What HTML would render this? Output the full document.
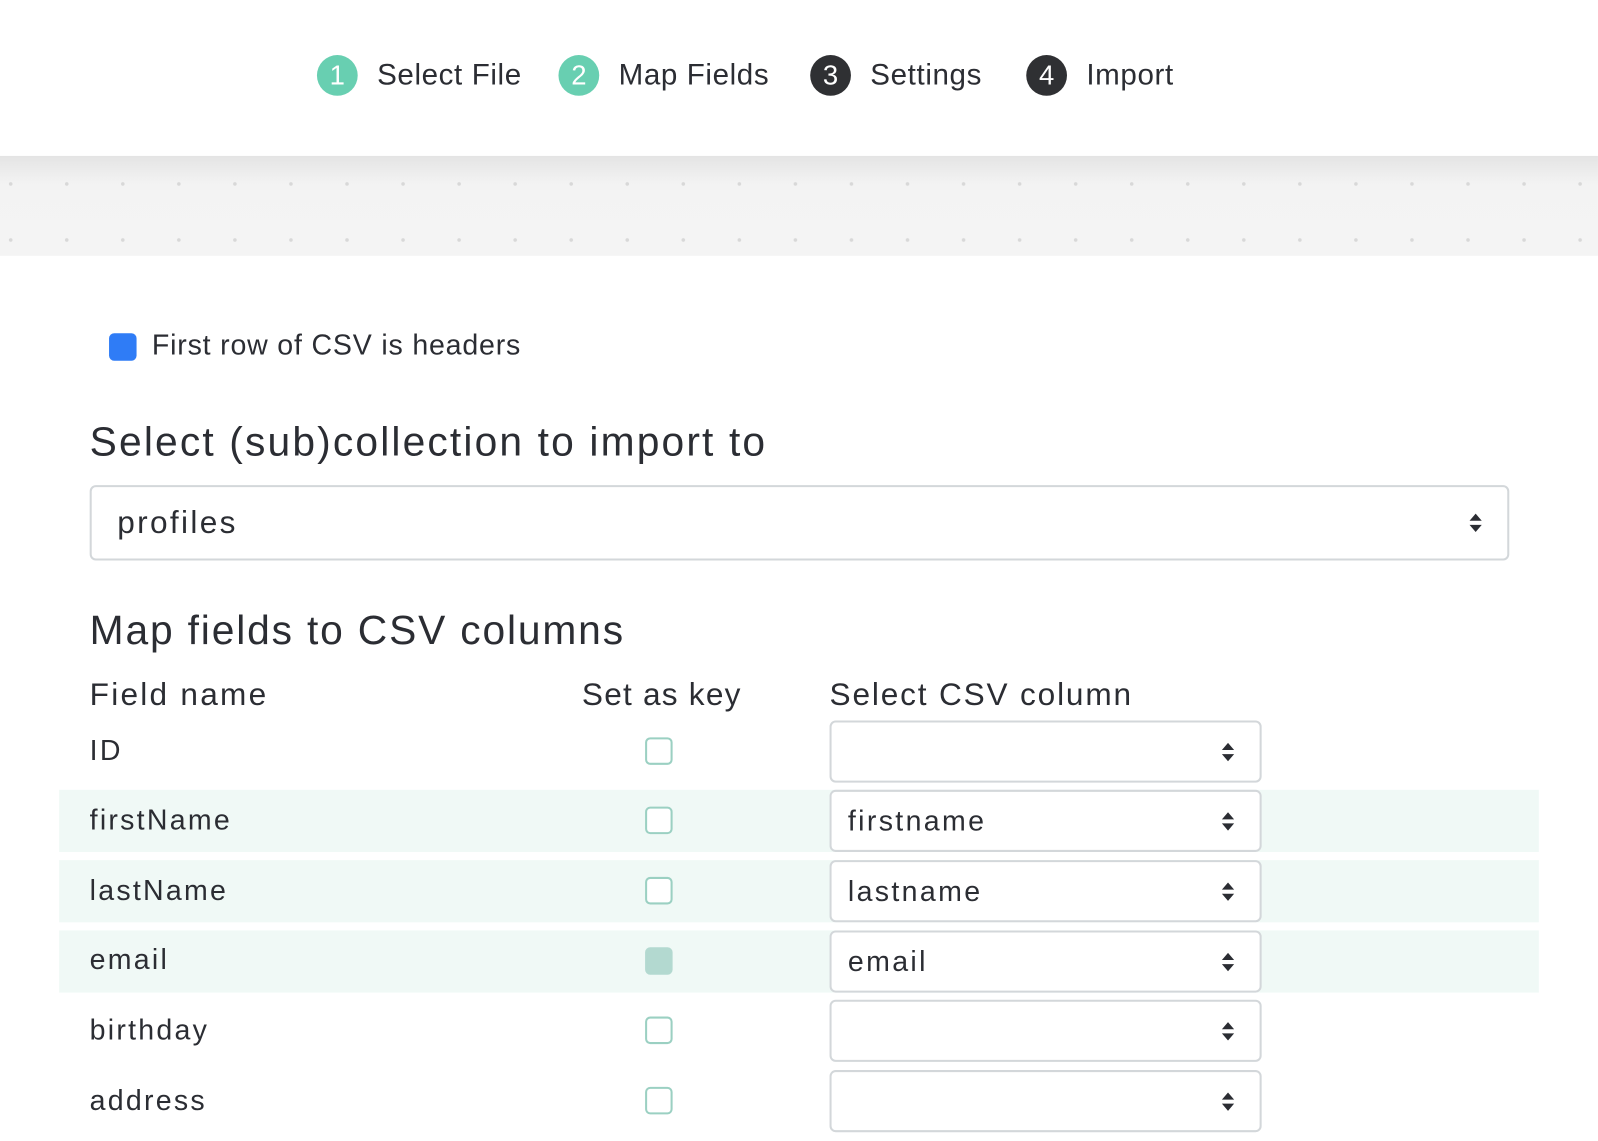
<!DOCTYPE html>
<html><head><style>
body{margin:0;width:1598px;height:1140px;overflow:hidden;background:#fff;font-family:"Liberation Sans",sans-serif;color:#2b2d33;position:relative}
#w{position:absolute;left:0;top:0;width:1568px;height:1120px;transform:scale(1.0191);transform-origin:0 0}
.a{position:absolute}
.step{position:absolute;top:54px;height:40px;display:flex;align-items:center;font-size:29px;color:#2b2d33;letter-spacing:0.6px}
.c{width:40px;height:40px;border-radius:50%;color:#fff;font-size:27px;display:flex;align-items:center;justify-content:center;margin-right:19px;letter-spacing:0}
.band{position:absolute;left:0;top:153px;width:1568px;height:98px;
background-image:radial-gradient(circle,#d8d8d8 1.6px,transparent 2px),linear-gradient(#e4e4e4,#f3f3f3 28px,#f4f4f4);
background-size:55px 55px,100% 100%;background-position:-17px 0px,0 0;background-repeat:repeat,no-repeat}
.sel{position:absolute;border:2px solid #d3d7da;border-radius:6px;box-sizing:border-box;background:#fff;font-size:28px;display:flex;align-items:center;letter-spacing:2.3px}
.arr{position:absolute;right:24px;top:50%;transform:translateY(-50%);width:14px;height:20px}
.row{position:absolute;left:58px;width:1452px;height:61px;background:#f0f9f6}
.lbl{position:absolute;left:88px;font-size:28px;transform:translateY(-50%);letter-spacing:2.2px}
.cb{position:absolute;left:633px;width:27px;height:27px;border:2px solid #9bd0c2;border-radius:5px;box-sizing:border-box;background:#fff;transform:translateY(-50%)}
.h{font-size:40px;letter-spacing:2.1px}
.th{font-size:31px;letter-spacing:2.2px}
</style></head><body><div id="w">
<div class="step" style="left:311px"><div class="c" style="background:#68cfb1">1</div>Select File</div>
<div class="step" style="left:548px"><div class="c" style="background:#68cfb1">2</div>Map Fields</div>
<div class="step" style="left:795px"><div class="c" style="background:#2f3033">3</div>Settings</div>
<div class="step" style="left:1007px"><div class="c" style="background:#2f3033">4</div>Import</div>
<div class="band"></div>

<div class="a" style="left:107px;top:327px;width:27px;height:27px;background:#2f7cf6;border-radius:5px"></div>
<div class="a" style="left:149px;top:323px;font-size:28px;letter-spacing:0.8px">First row of CSV is headers</div>
<div class="a h" style="left:88px;top:412px">Select (sub)collection to import to</div>
<div class="sel" style="left:88px;top:476px;width:1393px;height:74px;padding-left:25px;font-size:31px">profiles<svg class="arr" viewBox="0 0 14 20"><path d="M7 1L13 8H1z M7 19L13 12H1z" fill="#2b2d33"/></svg></div>
<div class="a h" style="left:88px;top:597px;letter-spacing:1.8px">Map fields to CSV columns</div>
<div class="a th" style="left:88px;top:664px">Field name</div>
<div class="a th" style="left:571px;top:664px;letter-spacing:1.2px">Set as key</div>
<div class="a th" style="left:814px;top:664px;letter-spacing:1.8px">Select CSV column</div>

<div class="row" style="top:775px"></div>
<div class="row" style="top:844px"></div>
<div class="row" style="top:913px"></div>

<div class="lbl" style="top:737px">ID</div>
<div class="lbl" style="top:805px">firstName</div>
<div class="lbl" style="top:874px">lastName</div>
<div class="lbl" style="top:942px">email</div>
<div class="lbl" style="top:1011px">birthday</div>
<div class="lbl" style="top:1080px">address</div>

<div class="cb" style="top:737px"></div>
<div class="cb" style="top:805px"></div>
<div class="cb" style="top:874px"></div>
<div class="cb" style="top:943px;background:#b3d9d0;border-color:#b3d9d0"></div>
<div class="cb" style="top:1011px"></div>
<div class="cb" style="top:1080px"></div>

<div class="sel" style="left:814px;top:707px;width:424px;height:61px;padding-left:16px"><svg class="arr" viewBox="0 0 14 20"><path d="M7 1L13 8H1z M7 19L13 12H1z" fill="#2b2d33"/></svg></div>
<div class="sel" style="left:814px;top:775px;width:424px;height:61px;padding-left:16px">firstname<svg class="arr" viewBox="0 0 14 20"><path d="M7 1L13 8H1z M7 19L13 12H1z" fill="#2b2d33"/></svg></div>
<div class="sel" style="left:814px;top:844px;width:424px;height:61px;padding-left:16px">lastname<svg class="arr" viewBox="0 0 14 20"><path d="M7 1L13 8H1z M7 19L13 12H1z" fill="#2b2d33"/></svg></div>
<div class="sel" style="left:814px;top:913px;width:424px;height:61px;padding-left:16px">email<svg class="arr" viewBox="0 0 14 20"><path d="M7 1L13 8H1z M7 19L13 12H1z" fill="#2b2d33"/></svg></div>
<div class="sel" style="left:814px;top:981px;width:424px;height:61px;padding-left:16px"><svg class="arr" viewBox="0 0 14 20"><path d="M7 1L13 8H1z M7 19L13 12H1z" fill="#2b2d33"/></svg></div>
<div class="sel" style="left:814px;top:1050px;width:424px;height:61px;padding-left:16px"><svg class="arr" viewBox="0 0 14 20"><path d="M7 1L13 8H1z M7 19L13 12H1z" fill="#2b2d33"/></svg></div>
</div></body></html>
